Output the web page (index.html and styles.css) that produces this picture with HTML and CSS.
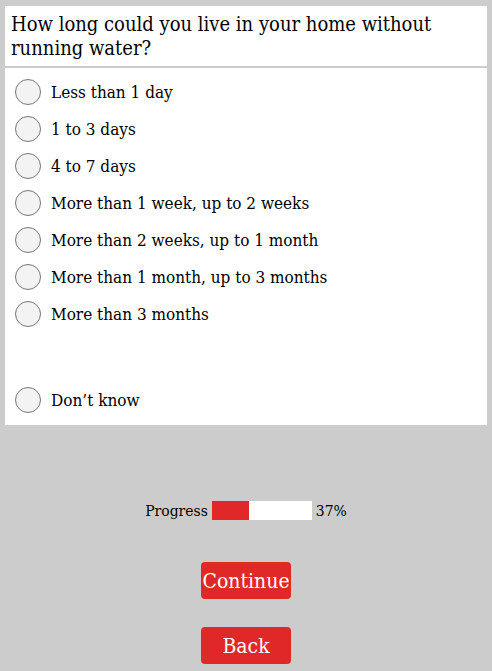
FILE: index.html
```html
<!DOCTYPE html>
<html lang="en">
<head>
    <meta charset="UTF-8">
    <meta name="viewport" content="width=device-width, initial-scale=1.0">
    <title>Survey</title>
    <link rel="stylesheet" href="styles.css">
</head>
<body>

    <!-- Question -->
    <div class="question">How long could you live in your home without running water?</div>

    <!-- Answers -->
    <div class="answers">
        <label class="option"><span class="radio"></span>Less than 1 day</label>
        <label class="option"><span class="radio"></span>1 to 3 days</label>
        <label class="option"><span class="radio"></span>4 to 7 days</label>
        <label class="option"><span class="radio"></span>More than 1 week, up to 2 weeks</label>
        <label class="option"><span class="radio"></span>More than 2 weeks, up to 1 month</label>
        <label class="option"><span class="radio"></span>More than 1 month, up to 3 months</label>
        <label class="option"><span class="radio"></span>More than 3 months</label>
        <label class="option spaced"><span class="radio"></span>Don&rsquo;t know</label>
    </div>

    <!-- Progress -->
    <div class="progress">
        <span>Progress</span>
        <div class="bar"><div class="fill" style="width: 37%"></div></div>
        <span>37%</span>
    </div>

    <div class="buttons">
        <button class="btn">Continue</button>
        <button class="btn">Back</button>
    </div>

</body>
</html>
```

FILE: styles.css
```css
body {
    margin: 0;
    padding: 6px 5px 0;
    background: #cccccc;
    font-family: 'DejaVu Serif', serif;
    font-stretch: condensed;
    color: #000;
}

/* Question Box */
.question {
    background: white;
    padding: 6px 6px 6px;
    font-size: 20px;
    line-height: 24px;
    margin-bottom: 2px;
}

/* Answer List */
.answers {
    background: white;
    padding: 5px 10px 7px;
}

.option {
    display: flex;
    align-items: center;
    gap: 10px;
    height: 37px;
    font-size: 17px;
}

.option.spaced {
    margin-top: 49px;
}

.radio {
    width: 24px;
    height: 24px;
    border: 1px solid #767676;
    border-radius: 50%;
    background: #f3f3f3;
    flex-shrink: 0;
}

/* Progress Bar */
.progress {
    display: flex;
    justify-content: center;
    align-items: center;
    gap: 4px;
    margin-top: 76px;
    font-size: 15.5px;
}

.bar {
    width: 100px;
    height: 19px;
    background: white;
}

.fill {
    height: 100%;
    background: #e02828;
}

/* Buttons */
.buttons {
    display: flex;
    flex-direction: column;
    align-items: center;
    gap: 28px;
    margin-top: 42px;
}

.btn {
    width: 90px;
    height: 37px;
    border: none;
    border-radius: 4px;
    background: #e02828;
    color: white;
    font-family: 'DejaVu Serif', serif;
    font-stretch: condensed;
    font-size: 21px;
    padding: 0;
}
```
